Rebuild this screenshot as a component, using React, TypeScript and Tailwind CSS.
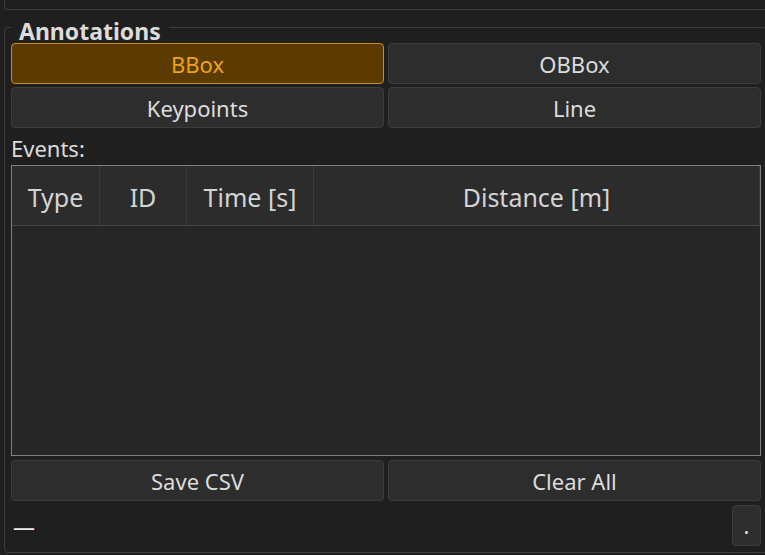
const font = { fontFamily: '"Noto Sans", "Open Sans", sans-serif' };

function Btn({
  label,
  active = false,
}: {
  label: string;
  active?: boolean;
}) {
  return (
    <button
      className={
        active
          ? "h-[41px] rounded-[4px] border border-[#c98c17] bg-[#5b3b00] text-[22px] leading-none text-[#e9a21c]"
          : "h-[41px] rounded-[4px] border border-[#3c3c3c] bg-[#2d2d2d] text-[22px] leading-none text-[#dcdcdc]"
      }
    >
      {label}
    </button>
  );
}

const columns = [
  { name: "Type", w: "w-[88px]" },
  { name: "ID", w: "w-[87px]" },
  { name: "Time [s]", w: "w-[127px]" },
  { name: "Distance [m]", w: "flex-1" },
];

export default function App() {
  return (
    <div
      className="h-[555px] w-[765px] overflow-hidden bg-[#1f1f1f] text-[#dcdcdc]"
      style={font}
    >
      {/* tail of the panel above */}
      <div className="ml-[4px] h-[10px] w-[800px] rounded-bl-[4px] border-b border-l border-[#3c3c3c]" />

      <fieldset className="ml-[4px] mt-[2px] w-[764px] rounded-[4px] border border-[#3c3c3c] px-[6px] pb-[6px]">
        <legend className="px-[8px] pt-[7px] text-[23px] font-bold leading-[24px] text-[#dcdcdc]">
          Annotations
        </legend>

        <div className="grid grid-cols-2 gap-x-[4px] gap-y-[3px]">
          <Btn label="BBox" active />
          <Btn label="OBBox" />
          <Btn label="Keypoints" />
          <Btn label="Line" />
        </div>

        <div className="h-[37px] pt-[2px] text-[22px] leading-[37px]">Events:</div>

        <div className="flex h-[291px] flex-col border border-[#808080] bg-[#262626]">
          <div className="flex h-[60px] border-b border-[#444444] bg-[#2c2c2c]">
            {columns.map((c) => (
              <div
                key={c.name}
                className={`${c.w} flex items-center justify-center border-r border-[#3c3c3c] pt-[4px] text-[25px] text-[#d4d4d4]`}
              >
                {c.name}
              </div>
            ))}
          </div>
          <div className="flex-1" />
        </div>

        <div className="mt-[4px] grid grid-cols-2 gap-x-[4px]">
          <Btn label="Save CSV" />
          <Btn label="Clear All" />
        </div>

        <div className="mt-[4px] flex h-[41px] items-center justify-between">
          <span className="pl-[2px] pt-[2px] text-[22px] text-[#ececec]">—</span>
          <button className="h-[41px] w-[29px] rounded-[4px] border border-[#3c3c3c] bg-[#2d2d2d] text-[22px] text-[#dcdcdc]">
            .
          </button>
        </div>
      </fieldset>
    </div>
  );
}
